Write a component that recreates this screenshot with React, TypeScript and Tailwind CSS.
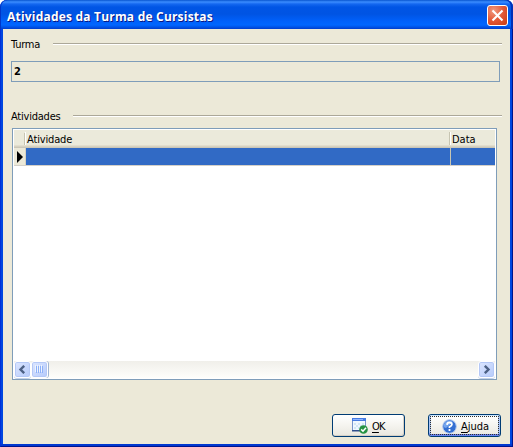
import type { ReactNode } from "react";

function GroupHeading({ label, lineClass }: { label: string; lineClass: string }) {
  return (
    <div className="relative flex h-[14px] items-center">
      <span className="pt-[2px] text-[11px] leading-[14px] tracking-[-0.22px]">{label}</span>
      <div className={`absolute right-0 top-[6px] h-[2px] border-t border-[#aca899] bg-white ${lineClass}`} />
    </div>
  );
}

function ScrollButton({ children, thumb = false }: { children: ReactNode; thumb?: boolean }) {
  return (
    <div
      className={`flex h-[17px] w-[17px] shrink-0 items-center justify-center rounded-[3px] border border-white bg-linear-to-br from-[#dce6ff] to-[#b5cafa] ${
        thumb ? "shadow-[inset_0_0_0_1px_#b4c8f6,1px_0_0_#a0b5d3]" : "shadow-[inset_0_0_0_1px_#b4c8f6,0_1px_0_#c4d2ea]"
      }`}
    >
      {children}
    </div>
  );
}

function PushButton({ children, focused = false }: { children: ReactNode; focused?: boolean }) {
  return (
    <button
      className={`relative flex h-[23px] w-[73px] items-center rounded-[3px] border border-[#003c74] bg-linear-to-b from-white via-[#f5f4ef] to-[#e9e7df] text-[11px] leading-[14px] ${
        focused ? "shadow-[inset_0_1px_0_#cee7ff,inset_0_-2px_0_#6982ee,inset_2px_0_0_#a9c4f5,inset_-2px_0_0_#a9c4f5]" : "shadow-[inset_-1px_-1px_0_#d6d0c5]"
      }`}
    >
      {children}
      {focused && <span className="absolute inset-x-[1px] inset-y-[1px] border border-dotted border-[#30302c]" />}
    </button>
  );
}

export default function App() {
  return (
    <div className="flex h-[447px] w-[513px] flex-col overflow-hidden bg-white font-['DejaVu_Sans_Condensed','DejaVu_Sans',sans-serif] text-black [font-stretch:condensed]">
      <div className="flex h-full flex-col rounded-t-[7px] border-x border-b border-l-[#0030d8] border-r-[#00138c] border-b-[#00138c] bg-[#0046e0]">
        <header className="-mx-px flex h-[29px] shrink-0 items-center justify-between rounded-t-[7px] bg-[linear-gradient(180deg,#0855d0_0px,#3b8dff_2px,#1468f0_4px,#0055e5_7px,#0054e3_14px,#0060fa_21px,#0066ff_25px,#0054e8_27px,#003dcc_29px)] pl-[7px] pr-[5px] shadow-[inset_1px_0_0_#0035c8,inset_-2px_0_0_#0030b8]">
          <h1 className="pt-[4px] font-['Open_Sans','Noto_Sans',sans-serif] text-[12px] font-bold leading-[18px] tracking-[0.2px] text-white [font-stretch:normal] [text-shadow:1px_1px_0_#0a1883]">
            Atividades da Turma de Cursistas
          </h1>
          <button aria-label="Fechar" className="mt-[2px] flex h-[21px] w-[21px] items-center justify-center rounded-[3px] border border-white bg-[radial-gradient(circle_at_30%_25%,#f09a80,#e35836_50%,#c83b12)]">
            <svg width="13" height="13" viewBox="0 0 13 13" stroke="white" strokeWidth="2.1" fill="none">
              <path d="M1.5 1.5 11.5 11.5M11.5 1.5 1.5 11.5" />
            </svg>
          </button>
        </header>

        <main className="ml-[2px] mr-[2px] flex h-[415px] flex-col bg-[#ece9d8] pl-[8px] pr-[8px] pt-[8px]">
          <GroupHeading label="Turma" lineClass="left-[42px]" />
          <div className="mt-[10px] flex h-[21px] w-[489px] items-center border border-[#7f9db9] pl-[2px] pt-px text-[11px] font-bold">2</div>
          <div className="mt-[27px]">
            <GroupHeading label="Atividades" lineClass="left-[62px]" />
          </div>

          <section className="ml-px mt-[5px] flex h-[252px] w-[485px] flex-col border border-[#7f9db9] bg-white p-px">
            <div className="flex h-[18px] shrink-0 items-center bg-[linear-gradient(180deg,#ebeadb_15px,#e2decd_15px,#e2decd_16px,#d6d2c2_16px,#d6d2c2_17px,#cbc7b8_17px)] text-[11px] leading-[14px]">
              <div className="h-[12px] w-[11px] border-r border-[#c7c5b2]" />
              <div className="-mt-px h-[13px] w-[425px] border-r border-[#c7c5b2] border-l border-l-white pl-px pt-px tracking-[-0.15px]">Atividade</div>
              <div className="-mt-px h-[13px] flex-1 border-l border-white pl-px pt-px">Data</div>
            </div>
            <div className="flex h-[18px] shrink-0 border-b border-[#d4d0c8]">
              <div className="flex w-[12px] items-center border-r border-[#d6d2c2] bg-[#ece9d8] pl-[3px]">
                <svg width="7" height="12" viewBox="0 0 7 12"><path d="M0 0 6 6 0 12Z" /></svg>
              </div>
              <div className="w-[425px] border-r border-[#c7c5b2] bg-[#316ac5]" />
              <div className="flex-1 bg-[#316ac5]" />
            </div>
            <div className="flex-1" />
            <div className="flex h-[17px] shrink-0 bg-linear-to-b from-[#f0efea] to-[#fefefb]">
              <ScrollButton>
                <svg width="9" height="9" viewBox="0 0 9 9" fill="none" stroke="#4d6185" strokeWidth="2.4"><path d="M6.2.8 2.5 4.5 6.2 8.2" /></svg>
              </ScrollButton>
              <ScrollButton thumb>
                <span className="flex gap-px">
                  {[0, 1, 2, 3].map((line) => (
                    <span key={line} className="h-[7px] w-px border-l border-[#8cb0f8] shadow-[-1px_-1px_0_#eef4fe]" />
                  ))}
                </span>
              </ScrollButton>
              <div className="flex-1" />
              <ScrollButton>
                <svg width="9" height="9" viewBox="0 0 9 9" fill="none" stroke="#4d6185" strokeWidth="2.4"><path d="M2.8.8 6.5 4.5 2.8 8.2" /></svg>
              </ScrollButton>
            </div>
          </section>

          <footer className="mt-[34px] flex justify-end gap-[23px] pr-px">
            <PushButton>
              <svg className="ml-[19px] shrink-0" width="16" height="16" viewBox="0 0 16 16">
                <rect x=".5" y=".5" width="13" height="12" fill="#f0f8ff" stroke="#7895cb" />
                <path d="M0 0h14v3H0z" fill="#477be0" />
                <path d="M1 1h10v1H1z" fill="#8eb4ff" />
                <path d="M2 5h2v2H2zM6 5h2v2H6zM4 7h2v2H4zM8 7h2v2H8zM2 9h2v2H2zM6 9h2v2H6zM10 5h2v2h-2z" fill="#d3e7f6" />
                <path d="M0 12h10v1.5H0z" fill="#314f8d" />
                <circle cx="11.5" cy="11.5" r="4.3" fill="#269343" />
                <path d="m9.2 11.4 1.8 1.8 3-3.5" fill="none" stroke="white" strokeWidth="1.5" />
              </svg>
              <span className="ml-[4px] pt-[2px] tracking-[-0.9px]"><u className="underline-offset-2">O</u>K</span>
            </PushButton>
            <PushButton focused>
              <svg className="ml-[13px] mt-px shrink-0" width="15" height="15" viewBox="0 0 15 15">
                <circle cx="7.5" cy="7.5" r="6.8" fill="#346fd2" stroke="#b2c9ef" />
                <path d="M1.5 8Q1.5 2 7.5 1.5Q10 1.5 11 3L4 9Z" fill="#75a5ed" />
                <path d="M5 5.8Q5.2 3.5 7.5 3.5T9.9 5.5Q9.9 6.8 7.5 7.8V9M7.5 10.1v1.9" fill="none" stroke="white" strokeWidth="1.8" />
              </svg>
              <span className="ml-[4px] pt-[2px]"><u className="underline-offset-2">A</u>juda</span>
            </PushButton>
          </footer>
        </main>
        <div className="h-[2px] bg-[#0038d0]" />
      </div>
    </div>
  );
}
